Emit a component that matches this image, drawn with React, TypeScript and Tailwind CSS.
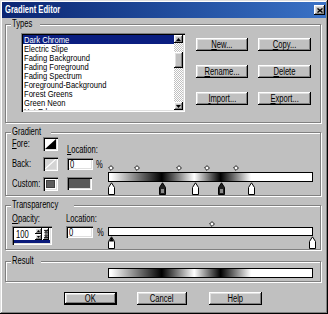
import React from "react";

const raised =
  "bg-[#c0c0c0] shadow-[inset_-1px_-1px_0_#000,inset_1px_1px_0_#fff,inset_-2px_-2px_0_#808080,inset_2px_2px_0_#dfdfdf]";
const sunken =
  "shadow-[inset_1px_1px_0_#808080,inset_2px_2px_0_#000,inset_-1px_-1px_0_#fff,inset_-2px_-2px_0_#dfdfdf]";
const grad =
  "bg-[linear-gradient(to_right,#fff_1%,#000_26%,#fff_42%,#000_55%,#fff_70%)]";

const TYPES = [
  "Dark Chrome",
  "Electric Slipe",
  "Fading Background",
  "Fading Foreground",
  "Fading Spectrum",
  "Foreground-Background",
  "Forest Greens",
  "Green Neon",
  "Hot Edges",
];

// narrow text, the dialog is squeezed horizontally
function T({ children, center }: { children: React.ReactNode; center?: boolean }) {
  return (
    <span
      className={`inline-block whitespace-nowrap scale-x-[0.76] ${center ? "origin-center" : "origin-left"}`}
    >
      {children}
    </span>
  );
}

function Group({
  label,
  className,
  children,
}: {
  label: string;
  className: string;
  children?: React.ReactNode;
}) {
  return (
    <div
      className={`relative ml-[5px] w-[316px] border border-[#808080] shadow-[inset_1px_1px_0_#fff,1px_1px_0_#fff] ${className}`}
    >
      <span className="absolute left-[5px] top-[-6px] bg-[#c0c0c0] px-[1px] leading-[10px]">
        <T>{label}</T>
      </span>
      {children}
    </div>
  );
}

function Btn({ children, w, def }: { children: React.ReactNode; w: string; def?: boolean }) {
  return (
    <div
      className={`h-[13px] ${w} ${raised} flex items-center justify-center ${def ? "border border-black" : ""}`}
    >
      <T center>{children}</T>
    </div>
  );
}

function U({ children }: { children: React.ReactNode }) {
  return <span className="underline underline-offset-1">{children}</span>;
}

function Arrow({ down }: { down?: boolean }) {
  return (
    <div className={`h-[8px] ${raised} flex items-center justify-center`}>
      <svg width="5" height="3" viewBox="0 0 5 3">
        <path d={down ? "M0 0H5L2.5 3Z" : "M0 3H5L2.5 0Z"} fill="#000" />
      </svg>
    </div>
  );
}

function Diamond({ x }: { x: number }) {
  return (
    <svg className="absolute top-0" style={{ left: x - 3 }} width="6" height="6" viewBox="0 0 6 6">
      <path d="M3 0.6L5.4 3L3 5.4L0.6 3Z" fill="#fff" stroke="#000" strokeWidth="0.9" />
    </svg>
  );
}

function Stop({ x, dark, tip }: { x: number; dark?: boolean; tip?: boolean }) {
  return (
    <svg className="absolute top-0" style={{ left: x - 3.5 }} width="7" height="13" viewBox="0 0 7 13">
      <path
        d="M0.5 12.5V5.5L3.5 0.8L6.5 5.5V12.5Z"
        fill={dark ? "#202020" : "#fff"}
        stroke="#000"
      />
      {tip && <path d="M1 5.5L3.5 1.2L6 5.5Z" fill="#000" />}
      {dark && <rect x="2" y="7" width="3" height="4" fill="#8a8a8a" />}
    </svg>
  );
}

export default function App() {
  return (
    <div className="w-[328px] h-[314px] bg-[#c0c0c0] flex flex-col overflow-hidden font-['Liberation_Sans',Arial,sans-serif] text-[10px] leading-[10px] text-black shadow-[inset_-1px_-1px_0_#000,inset_1px_1px_0_#dfdfdf,inset_-2px_-2px_0_#808080,inset_2px_2px_0_#fff]">
      {/* title bar */}
      <div className="mx-[2px] mt-[2px] h-[16px] bg-linear-to-r from-[#0b2572] to-[#3a72c6] flex items-center justify-between pl-[3px] pr-[1px]">
        <span className="text-white font-bold">
          <T>Gradient Editor</T>
        </span>
        <div className={`w-[11px] h-[10px] ${raised} flex items-center justify-center`}>
          <svg width="6" height="5" viewBox="0 0 6 5">
            <path d="M0.5 0.5L5.5 4.5M5.5 0.5L0.5 4.5" stroke="#000" strokeWidth="1.4" />
          </svg>
        </div>
      </div>

      {/* Types */}
      <Group label="Types" className="mt-[6px] h-[99px] flex pl-[15px] pt-[8px]">
        <div className={`w-[164px] h-[79px] bg-white ${sunken} p-[2px] flex`}>
          <div className="flex-1 overflow-hidden text-[9.5px]">
            {TYPES.map((t, i) => (
              <div
                key={t}
                className={`h-[9px] leading-[9px] pl-[1px] ${i === 0 ? "bg-[#0a1e80] text-white" : ""}`}
              >
                <span className="inline-block whitespace-nowrap scale-x-[0.8] origin-left">{t}</span>
              </div>
            ))}
          </div>
          <div className="w-[9px] flex flex-col bg-[repeating-conic-gradient(#c0c0c0_0_25%,#fff_0_50%)] bg-size-[2px_2px]">
            <Arrow />
            <div className="h-[9px]" />
            <div className={`h-[16px] ${raised}`} />
            <div className="flex-1" />
            <Arrow down />
          </div>
        </div>
        <div className="ml-[11px] mt-[5px] self-start grid grid-cols-[52px_53px] gap-x-[10px] gap-y-[14px]">
          <Btn w="w-[52px]">
            <U>N</U>ew...
          </Btn>
          <Btn w="w-[53px]">
            <U>C</U>opy...
          </Btn>
          <Btn w="w-[52px]">
            <U>R</U>ename...
          </Btn>
          <Btn w="w-[53px]">
            <U>D</U>elete
          </Btn>
          <Btn w="w-[52px]">
            <U>I</U>mport...
          </Btn>
          <Btn w="w-[53px]">
            <U>E</U>xport...
          </Btn>
        </div>
      </Group>

      {/* Gradient */}
      <Group label="Gradient" className="mt-[9px] h-[64px] flex pl-[6px] pt-[4px]">
        <div className="flex flex-col gap-[6px]">
          <div className="flex items-center h-[14px]">
            <div className="w-[31px]">
              <T>
                <U>F</U>ore:
              </T>
            </div>
            <div className={`w-[15px] h-[14px] bg-white ${sunken} p-[2px]`}>
              <svg width="11" height="10" viewBox="0 0 11 10" className="block">
                <path d="M0 10L11 0V10Z" fill="#000" />
              </svg>
            </div>
          </div>
          <div className="flex items-center h-[14px]">
            <div className="w-[31px]">
              <T>Back:</T>
            </div>
            <div className={`w-[15px] h-[14px] bg-[#d4d4d4] ${sunken} p-[2px]`}>
              <svg width="11" height="10" viewBox="0 0 11 10" className="block">
                <path d="M0 10L11 0" stroke="#fff" strokeWidth="1.2" />
              </svg>
            </div>
          </div>
          <div className="flex items-center h-[14px]">
            <div className="w-[31px]">
              <T>Custom:</T>
            </div>
            <div className={`w-[15px] h-[14px] bg-white ${sunken} p-[3px]`}>
              <div className="w-full h-full bg-[#5c5c5c] border border-[#404040]" />
            </div>
          </div>
        </div>
        <div className="ml-[9px] flex flex-col pt-[8px]">
          <div className="h-[10px]">
            <T>
              <U>L</U>ocation:
            </T>
          </div>
          <div className="mt-[3px] flex">
            <div className={`w-[26px] h-[12px] bg-white ${sunken} pl-[3px] pt-[1px] leading-[11px]`}>
              <T>0</T>
            </div>
            <div className="w-[15px] pl-[3px] pt-[2px]">
              <T>%</T>
            </div>
          </div>
          <div className={`mt-[7px] w-[25px] h-[13px] bg-[#5a5a5a] ${sunken}`} />
        </div>
        <div className="flex flex-col pt-[28px] w-[205px]">
          <div className="relative h-[7px]">
            {[3, 29, 71, 99, 128].map((x) => (
              <Diamond key={x} x={x} />
            ))}
          </div>
          <div className={`h-[10px] border border-black ${grad}`} />
          <div className="relative h-[13px]">
            <Stop x={3} />
            <Stop x={54} dark />
            <Stop x={87} />
            <Stop x={113} dark />
            <Stop x={143} />
          </div>
        </div>
      </Group>

      {/* Transparency */}
      <Group label="Transparency" className="mt-[9px] h-[45px] flex pl-[6px] pt-[8px]">
        <div className="w-[40px] flex flex-col">
          <div className="h-[10px]">
            <T>
              <U>O</U>pacity:
            </T>
          </div>
          <div className={`mt-[2px] w-[40px] h-[19px] bg-white ${sunken} p-[2px] flex flex-col`}>
            <div className="flex-1 flex items-center">
              <div className="w-[21px] pl-[2px] leading-[11px]">
                <T>100</T>
              </div>
              <div className="w-[7px] h-full flex flex-col">
                <div className={`flex-1 ${raised} flex items-center justify-center`}>
                  <svg width="3" height="2" viewBox="0 0 3 2">
                    <path d="M0 2H3L1.5 0Z" fill="#000" />
                  </svg>
                </div>
                <div className={`flex-1 ${raised} flex items-center justify-center`}>
                  <svg width="3" height="2" viewBox="0 0 3 2">
                    <path d="M0 0H3L1.5 2Z" fill="#000" />
                  </svg>
                </div>
              </div>
              <div className={`ml-[1px] w-[6px] h-full ${raised} flex items-center justify-center`}>
                <svg width="4" height="8" viewBox="0 0 4 8">
                  <path d="M0 0.5H4M2 1V7M0.5 3L2 1.5L3.5 3M0.5 5L2 6.5L3.5 5M0 7.5H4" stroke="#000" strokeWidth="0.8" fill="none" />
                </svg>
              </div>
            </div>
            <div className="h-[3px] bg-[#0a1a7a]" />
          </div>
        </div>
        <div className="ml-[14px] w-[27px] flex flex-col">
          <div className="h-[10px]">
            <T>Location:</T>
          </div>
          <div className={`mt-[2px] w-[27px] h-[12px] bg-white ${sunken} pl-[3px] pt-[1px] leading-[11px]`}>
            <T>0</T>
          </div>
        </div>
        <div className="w-[15px] pl-[4px] pt-[14px]">
          <T>%</T>
        </div>
        <div className="flex flex-col pt-[7px] w-[205px]">
          <div className="relative h-[6px]">
            <Diamond x={104} />
          </div>
          <div className="h-[9px] border border-black bg-white" />
          <div className="relative h-[13px]">
            <Stop x={3} tip />
            <Stop x={204} />
          </div>
        </div>
      </Group>

      {/* Result */}
      <Group label="Result" className="mt-[11px] h-[21px] pl-[102px] pt-[6px]">
        <div className={`w-[205px] h-[10px] border border-black ${grad}`} />
      </Group>

      {/* buttons */}
      <div className="mt-[10px] ml-[64px] flex">
        <Btn w="w-[53px]" def>
          OK
        </Btn>
        <div className="ml-[20px]">
          <Btn w="w-[50px]">Cancel</Btn>
        </div>
        <div className="ml-[22px]">
          <Btn w="w-[53px]">Help</Btn>
        </div>
      </div>
    </div>
  );
}
